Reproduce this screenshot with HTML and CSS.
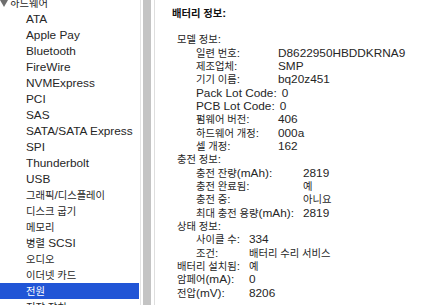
FILE: index.html
```html
<!DOCTYPE html>
<html lang="ko">
<head>
  <meta charset="UTF-8">
  <meta name="viewport" content="width=device-width, initial-scale=1.0">
  <title>시스템 정보 - 전원</title>
  <link rel="stylesheet" href="styles.css">
</head>
<body>

  <div class="window">
    <div class="sidebar">
      <ul class="tree">
        <li class="group"><span class="disc"></span><span class="ko">하드웨어</span></li>
        <li>ATA</li>
        <li>Apple Pay</li>
        <li>Bluetooth</li>
        <li>FireWire</li>
        <li>NVMExpress</li>
        <li>PCI</li>
        <li>SAS</li>
        <li>SATA/SATA Express</li>
        <li>SPI</li>
        <li>Thunderbolt</li>
        <li>USB</li>
        <li><span class="ko">그래픽</span>/<span class="ko">디스플레이</span></li>
        <li><span class="ko">디스크 굽기</span></li>
        <li><span class="ko">메모리</span></li>
        <li><span class="ko">병렬</span> SCSI</li>
        <li><span class="ko">오디오</span></li>
        <li><span class="ko">이더넷 카드</span></li>
        <li class="selected"><span class="ko">전원</span></li>
        <li><span class="ko">저장 장치</span></li>
      </ul>
    </div>

    <div class="scroll"><div class="thumb"></div></div>

    <div class="pane">
      <div class="title"><span class="ko">배터리 정보</span>:</div>
      <div class="blank"></div>

      <div class="section">
        <div class="line"><span class="ko">모델 정보</span>:</div>
        <div class="rows model">
          <div class="row"><span class="label"><span class="ko">일련 번호</span>:</span><span class="value">D8622950HBDDKRNA9</span></div>
          <div class="row"><span class="label"><span class="ko">제조업체</span>:</span><span class="value">SMP</span></div>
          <div class="row"><span class="label"><span class="ko">기기 이름</span>:</span><span class="value">bq20z451</span></div>
          <div class="row"><span class="label">Pack Lot Code:</span><span class="value">0</span></div>
          <div class="row"><span class="label">PCB Lot Code:</span><span class="value">0</span></div>
          <div class="row"><span class="label"><span class="ko">펌웨어 버전</span>:</span><span class="value">406</span></div>
          <div class="row"><span class="label"><span class="ko">하드웨어 개정</span>:</span><span class="value">000a</span></div>
          <div class="row"><span class="label"><span class="ko">셀 개정</span>:</span><span class="value">162</span></div>
        </div>

        <div class="line"><span class="ko">충전 정보</span>:</div>
        <div class="rows charge">
          <div class="row"><span class="label"><span class="ko">충전 잔량</span>(mAh):</span><span class="value">2819</span></div>
          <div class="row"><span class="label"><span class="ko">충전 완료됨</span>:</span><span class="value"><span class="ko">예</span></span></div>
          <div class="row"><span class="label"><span class="ko">충전 중</span>:</span><span class="value"><span class="ko">아니요</span></span></div>
          <div class="row"><span class="label"><span class="ko">최대 충전 용량</span>(mAh):</span><span class="value">2819</span></div>
        </div>

        <div class="line"><span class="ko">상태 정보</span>:</div>
        <div class="rows health">
          <div class="row"><span class="label"><span class="ko">사이클 수</span>:</span><span class="value">334</span></div>
          <div class="row"><span class="label"><span class="ko">조건</span>:</span><span class="value"><span class="ko">배터리 수리 서비스</span></span></div>
        </div>

        <div class="rows top">
          <div class="row"><span class="label"><span class="ko">배터리 설치됨</span>:</span><span class="value"><span class="ko">예</span></span></div>
          <div class="row"><span class="label"><span class="ko">암페어</span>(mA):</span><span class="value">0</span></div>
          <div class="row"><span class="label"><span class="ko">전압</span>(mV):</span><span class="value">8206</span></div>
        </div>
      </div>
    </div>
  </div>

</body>
</html>
```

FILE: styles.css
```css
body {
  margin: 0;
  font-family: "Liberation Sans", "Noto Sans CJK KR", sans-serif;
  font-size: 11.8px;
  color: #262626;
  background: #fff;
}

.window {
  display: flex;
  height: 305px;
  overflow: hidden;
}

/* korean runs are set smaller so they take the width of the mac font */
.ko {
  font-size: 10.3px;
  line-height: 1;
}

/* left tree */
.sidebar {
  flex: none;
  width: 139px;
  overflow: hidden;
}

.tree {
  list-style: none;
  margin: -5px 0 0;
  padding: 0;
}

.tree li {
  height: 16px;
  line-height: 16px;
  padding-left: 26px;
  white-space: nowrap;
}

.tree .group {
  padding-left: 0;
}

.disc {
  display: inline-block;
  width: 0;
  height: 0;
  border-left: 4px solid transparent;
  border-right: 4px solid transparent;
  border-top: 7px solid #6e6e6e;
  margin-right: 2px;
  vertical-align: middle;
}

.tree .selected {
  background: #2155d6;
  color: #fff;
}

/* scroll bar between the panes */
.scroll {
  flex: none;
  width: 13px;
  margin-left: 1px;
  border-left: 1px solid #e4e4e4;
  border-right: 1px solid #dedede;
}

.thumb {
  width: 8px;
  height: 100%;
  margin-left: 2px;
  background: #c4c4c4;
}

/* right detail pane */
.pane {
  flex: 1;
  padding: 6.67px 0 0 17px;
  line-height: 13.33px;
  white-space: nowrap;
}

.title {
  font-weight: bold;
  color: #111;
}

.blank {
  height: 13.33px;
}

.section {
  padding-left: 5px;
}

.rows {
  padding-left: 19px;
}

.rows.top {
  padding-left: 0;
}

.row {
  display: flex;
  gap: 5px;
  height: 13.33px;
}

.model .label {
  min-width: 77px;
}

.charge .label {
  min-width: 102px;
}

.health .label {
  min-width: 48px;
}

.top .label {
  min-width: 67px;
}
```
